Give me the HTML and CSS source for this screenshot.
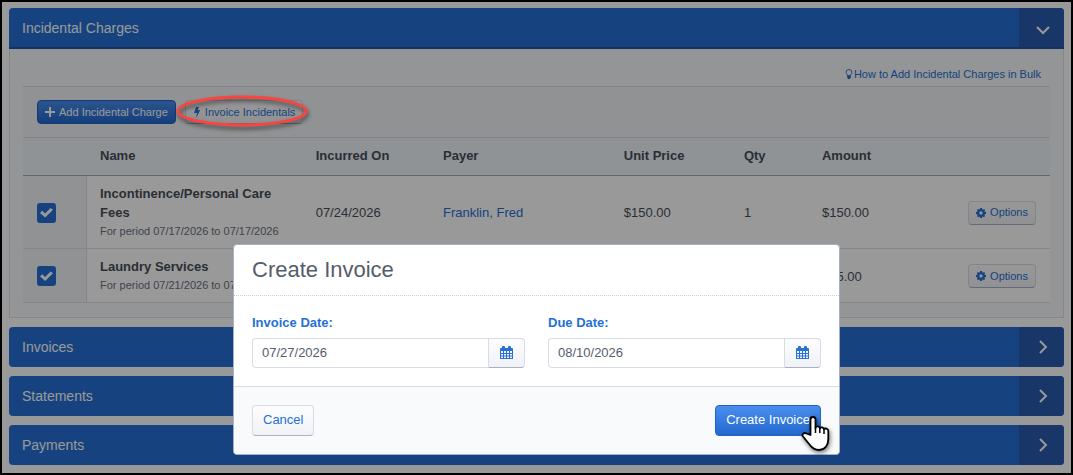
FILE: index.html
```html
<!DOCTYPE html>
<html lang="en">
<head>
<meta charset="utf-8">
<title>Create Invoice</title>
<link rel="stylesheet" href="styles.css">
</head>
<body>
<svg class="sprite" aria-hidden="true">
  <symbol id="gear" viewBox="0 0 16 16"><path fill="currentColor" fill-rule="evenodd" d="M6.500 0h3l.4 2 1.100.6L12.700 1.400l1.900 1.900L13.400 5l.6 1.100 2 .4v3l-2 .4-.6 1.100 1.200 1.700-1.900 1.900L11 13.400l-1.100.6-.4 2h-3l-.4-2L5 13.400l-1.700 1.200-1.900-1.900L2.600 11 2 9.900l-2-.4v-3l2-.4L2.600 5 1.400 3.300l1.900-1.900L5 2.600 6.100 2zM8 5.300a2.700 2.700 0 1 0 0 5.400 2.700 2.700 0 0 0 0-5.400z"/></symbol>
  <symbol id="calendar" viewBox="0 0 13 13"><path fill="currentColor" fill-rule="evenodd" d="M1 2h1V1a1 1 0 0 1 1-1h1a1 1 0 0 1 1 1v1h3V1a1 1 0 0 1 1-1h1a1 1 0 0 1 1 1v1h1a1 1 0 0 1 1 1v10H0V3a1 1 0 0 1 1-1zM1 5v2h2V5zm3 0v2h2V5zm3 0v2h2V5zm3 0v2h2V5zM1 8v1.500h2V8zm3 0v1.500h2V8zm3 0v1.500h2V8zm3 0v1.500h2V8zM1 10.500V12h2v-1.500zm3 0V12h2v-1.500zm3 0V12h2v-1.500zm3 0V12h2v-1.500z"/></symbol>
  <symbol id="right" viewBox="0 0 14 14"><path fill="none" stroke="currentColor" stroke-width="2" d="M4 1l6 6-6 6"/></symbol>
</svg>

<main class="page">
  <section class="panel">
    <header class="bar bar-open">
      <h2>Incidental Charges</h2>
      <button class="toggle" type="button" aria-label="Collapse Incidental Charges"><svg width="14" height="14" viewBox="0 0 14 14"><path fill="none" stroke="currentColor" stroke-width="2" d="M1 4l6 6 6-6"/></svg></button>
    </header>
    <div class="panel-body">
      <div class="help">
        <a href="#"><svg width="8" height="10" viewBox="0 0 8 11"><path fill="none" stroke="currentColor" d="M2.500 7.500C2.500 6 .8 5.500.8 3.500a3.200 3 0 0 1 6.400 0c0 2-1.700 2.500-1.700 4z"/><path fill="currentColor" d="M2 7h4v2.500L5 11H3L2 9.500z"/></svg>How to Add Incidental Charges in Bulk</a>
      </div>
      <div class="tools">
        <button class="btn btn-small btn-primary" type="button"><svg width="10" height="10" viewBox="0 0 10 10"><path fill="none" stroke="currentColor" stroke-width="2" d="M5 0v10M0 5h10"/></svg>Add Incidental Charge</button>
        <div class="marked">
          <button class="btn btn-small" type="button"><svg width="8" height="11" viewBox="1 0 8 11"><path fill="currentColor" d="M4 0h3L5.500 3.300 8.200 3 4.200 11l.8-5.300-3 .5z"/></svg>Invoice Incidentals</button>
          <svg class="ring" viewBox="0 0 142 44" aria-hidden="true"><ellipse cx="71" cy="21" rx="64" ry="14" fill="none" stroke="#fb4440" stroke-width="3"/></svg>
        </div>
      </div>
      <table class="charges">
        <colgroup><col class="c-check"><col class="c-name"><col class="c-date"><col class="c-payer"><col class="c-price"><col class="c-qty"><col></colgroup>
        <thead>
          <tr><td></td><th>Name</th><th>Incurred On</th><th>Payer</th><th>Unit Price</th><th>Qty</th><th>Amount</th></tr>
        </thead>
        <tbody>
          <tr>
            <td class="pick"><input type="checkbox" checked aria-label="Incontinence/Personal Care Fees"></td>
            <td><strong>Incontinence/Personal Care Fees</strong><small>For period 07/17/2026 to 07/17/2026</small></td>
            <td>07/24/2026</td><td><a href="#">Franklin, Fred</a></td><td>$150.00</td><td>1</td>
            <td><div class="amount"><span>$150.00</span><button class="btn btn-small" type="button"><svg width="10" height="10"><use href="#gear"/></svg>Options</button></div></td>
          </tr>
          <tr>
            <td class="pick"><input type="checkbox" checked aria-label="Laundry Services"></td>
            <td><strong>Laundry Services</strong><small>For period 07/21/2026 to 07/21/2026</small></td>
            <td></td><td></td><td></td><td></td>
            <td><div class="amount"><span>$15.00</span><button class="btn btn-small" type="button"><svg width="10" height="10"><use href="#gear"/></svg>Options</button></div></td>
          </tr>
        </tbody>
      </table>
    </div>
  </section>
  <section class="bar"><h2>Invoices</h2><button class="toggle" type="button" aria-label="Expand Invoices"><svg width="14" height="14"><use href="#right"/></svg></button></section>
  <section class="bar"><h2>Statements</h2><button class="toggle" type="button" aria-label="Expand Statements"><svg width="14" height="14"><use href="#right"/></svg></button></section>
  <section class="bar"><h2>Payments</h2><button class="toggle" type="button" aria-label="Expand Payments"><svg width="14" height="14"><use href="#right"/></svg></button></section>
</main>
<div class="backdrop"></div>

<form class="modal" role="dialog" aria-labelledby="modal-title">
  <h1 id="modal-title">Create Invoice</h1>
  <div class="fields">
    <div class="field">
      <label for="invoice-date">Invoice Date:</label>
      <div class="group"><input id="invoice-date" type="text" value="07/27/2026"><button class="btn" type="button" aria-label="Choose invoice date"><svg width="13" height="13"><use href="#calendar"/></svg></button></div>
    </div>
    <div class="field">
      <label for="due-date">Due Date:</label>
      <div class="group"><input id="due-date" type="text" value="08/10/2026"><button class="btn" type="button" aria-label="Choose due date"><svg width="13" height="13"><use href="#calendar"/></svg></button></div>
    </div>
  </div>
  <footer>
    <button class="btn" type="button">Cancel</button>
    <div class="submit">
      <button class="btn btn-primary" type="button">Create Invoice</button>
      <svg class="pointer" viewBox="0 0 30 38" aria-hidden="true"><path fill="#fff" stroke="#000" stroke-width="1.800" stroke-linejoin="round" d="M9.500 20V4.500a2.500 2.500 0 0 1 5 0V13c.6-2.200 4-2 4.300.4.700-1.700 3.900-1.400 4.200 1 .9-1.500 4.300-1 4.300 1.600v8c0 6-3.300 11-9.300 11-5 0-7-2-9.500-5.500L2 21.500c-1.500-2 1-4.500 3.500-3z"/><path fill="none" stroke="#000" stroke-width="1.500" d="M14.500 12v6M18.800 13v5M23 14.500V19"/></svg>
    </div>
  </footer>
</form>
</body>
</html>
```
FILE: styles.css
```css
* { box-sizing: border-box; }

body {
  margin: 0;
  font: 13px/19px "Liberation Sans", Arial, sans-serif;
  color: #484e58;
  background: #fff;
}

.sprite { display: none; }
h1, h2 { margin: 0; font-weight: normal; }
a { color: #2570d4; text-decoration: none; }
button, input { font: inherit; }

.page {
  display: flex;
  flex-direction: column;
  gap: 9px;
  min-height: 100vh;
  padding: 6px 7px;
  border: 2px solid #000;
}

.bar {
  display: flex;
  min-height: 40px;
  align-items: center;
  border-radius: 4px;
  overflow: hidden;
  background: #2570d4;
}
.bar h2 {
  flex: 1;
  padding-left: 13px;
  font-size: 14px;
  color: #fff;
}
.bar-open {
  min-height: 41px;
  border-bottom: 2px solid #23529c;
  border-radius: 4px 4px 0 0;
}
.bar-open h2 { padding-top: 2px; }
.toggle {
  display: flex;
  width: 45px;
  align-self: stretch;
  align-items: center;
  justify-content: center;
  padding: 0 0 0 2px;
  border: 0;
  color: #fff;
  background: #285dad;
}
.bar-open .toggle { padding-top: 4px; }

.panel-body {
  padding: 0 13px 14px;
  border: 1px solid #dcdfe6;
  border-top: 0;
  background: #f7f9fc;
}
.help {
  padding: 16px 9px 2px;
  border-bottom: 1px solid #d8dce4;
  font-size: 11px;
  text-align: right;
}
.help svg { margin-right: 1px; vertical-align: -1px; }
.tools {
  display: flex;
  gap: 9px;
  padding: 13px 14px;
  background: #f2f3f5;
}

.btn {
  display: inline-flex;
  align-items: center;
  justify-content: center;
  min-height: 31px;
  padding: 0 10px;
  border: 1px solid #d8dce6;
  border-bottom-color: #a9b1c5;
  border-radius: 4px;
  color: #2570d4;
  background: linear-gradient(#fdfdfe, #f1f2f6);
  white-space: nowrap;
}
.btn-small {
  min-height: 24px;
  gap: 4px;
  padding: 0 7px;
  font-size: 11px;
}
.btn-primary {
  border-color: #2163c4;
  color: #fff;
  background: linear-gradient(#4a8eee, #2268cf);
}

.marked { position: relative; display: flex; }
.ring {
  position: absolute;
  z-index: 2;
  left: -14px;
  top: -10px;
  width: 142px;
  height: 44px;
  filter: drop-shadow(1px 3px 2px #0008);
}

.charges {
  width: 100%;
  table-layout: fixed;
  border-collapse: separate;
  border-spacing: 0;
  background: #fff;
}
.c-check { width: 64px; }
.c-name { width: 21%; }
.c-date { width: 12.4%; }
.c-payer { width: 17.6%; }
.c-price { width: 11.7%; }
.c-qty { width: 7.6%; }
.charges th, .charges td { padding: 8px 14px 8px 13px; text-align: left; border-bottom: 1px solid #dcdfe5; }
.charges thead th, .charges thead td {
  height: 39px;
  padding-bottom: 10px;
  border-top: 1px solid #d9e0e6;
  border-bottom-color: #a0aab9;
  background: #eef5fa;
}
.charges tbody td { padding-bottom: 7px; }
.charges .pick { padding-left: 14px; border-right: 1px solid #dcdfe5; background: #f2f3f5; }
.charges strong, .charges small { display: block; }
.charges small { font-size: 11px; color: #6a7282; }
.pick input {
  display: grid;
  place-items: center;
  appearance: none;
  width: 19px;
  height: 20px;
  margin: 0;
  border-radius: 3px;
  background: #2570d4;
}
.pick input::before {
  content: "";
  width: 13px;
  height: 11px;
  background: #fff;
  clip-path: polygon(0 55%, 17% 35%, 39% 58%, 82% 8%, 100% 26%, 40% 96%);
}
.amount { display: flex; align-items: center; justify-content: space-between; }

.backdrop {
  position: fixed;
  z-index: 1;
  inset: 2px;
  background: rgba(0, 0, 0, 0.4);
}

.modal {
  position: absolute;
  z-index: 3;
  top: 244px;
  left: 0;
  right: 0;
  width: 90%;
  max-width: 607px;
  margin: 0 auto;
  border: 1px solid #a5b1c8;
  border-radius: 4px;
  background: #fff;
}
.modal h1 {
  padding: 11px 18px;
  border-bottom: 1px dotted #ccd2dc;
  font-size: 22px;
  line-height: 28px;
  color: #555c6c;
}
.fields {
  display: flex;
  gap: 23px;
  padding: 17px 18px 18px;
}
.field { flex: 1; }
.field label {
  display: block;
  margin-bottom: 6px;
  font-weight: bold;
  color: #2570d4;
}
.group { display: flex; }
.group input {
  flex: 1;
  min-width: 0;
  height: 30px;
  padding: 0 9px 2px;
  border: 1px solid #d8dce6;
  border-right: 0;
  border-radius: 4px 0 0 4px;
  color: #555c6c;
}
.group .btn {
  min-height: 30px;
  padding: 0 11px 2px;
  border-radius: 0 4px 4px 0;
}
.modal footer {
  display: flex;
  justify-content: space-between;
  padding: 18px;
  border-top: 1px solid #d8dce4;
  border-radius: 0 0 4px 4px;
  background: #f8fafc;
}
.modal footer .btn { padding-bottom: 2px; }
.submit { position: relative; display: flex; }
.pointer {
  position: absolute;
  right: -10px;
  top: 10px;
  width: 30px;
  height: 38px;
  filter: drop-shadow(1px 2px 2px #0008);
}
```
